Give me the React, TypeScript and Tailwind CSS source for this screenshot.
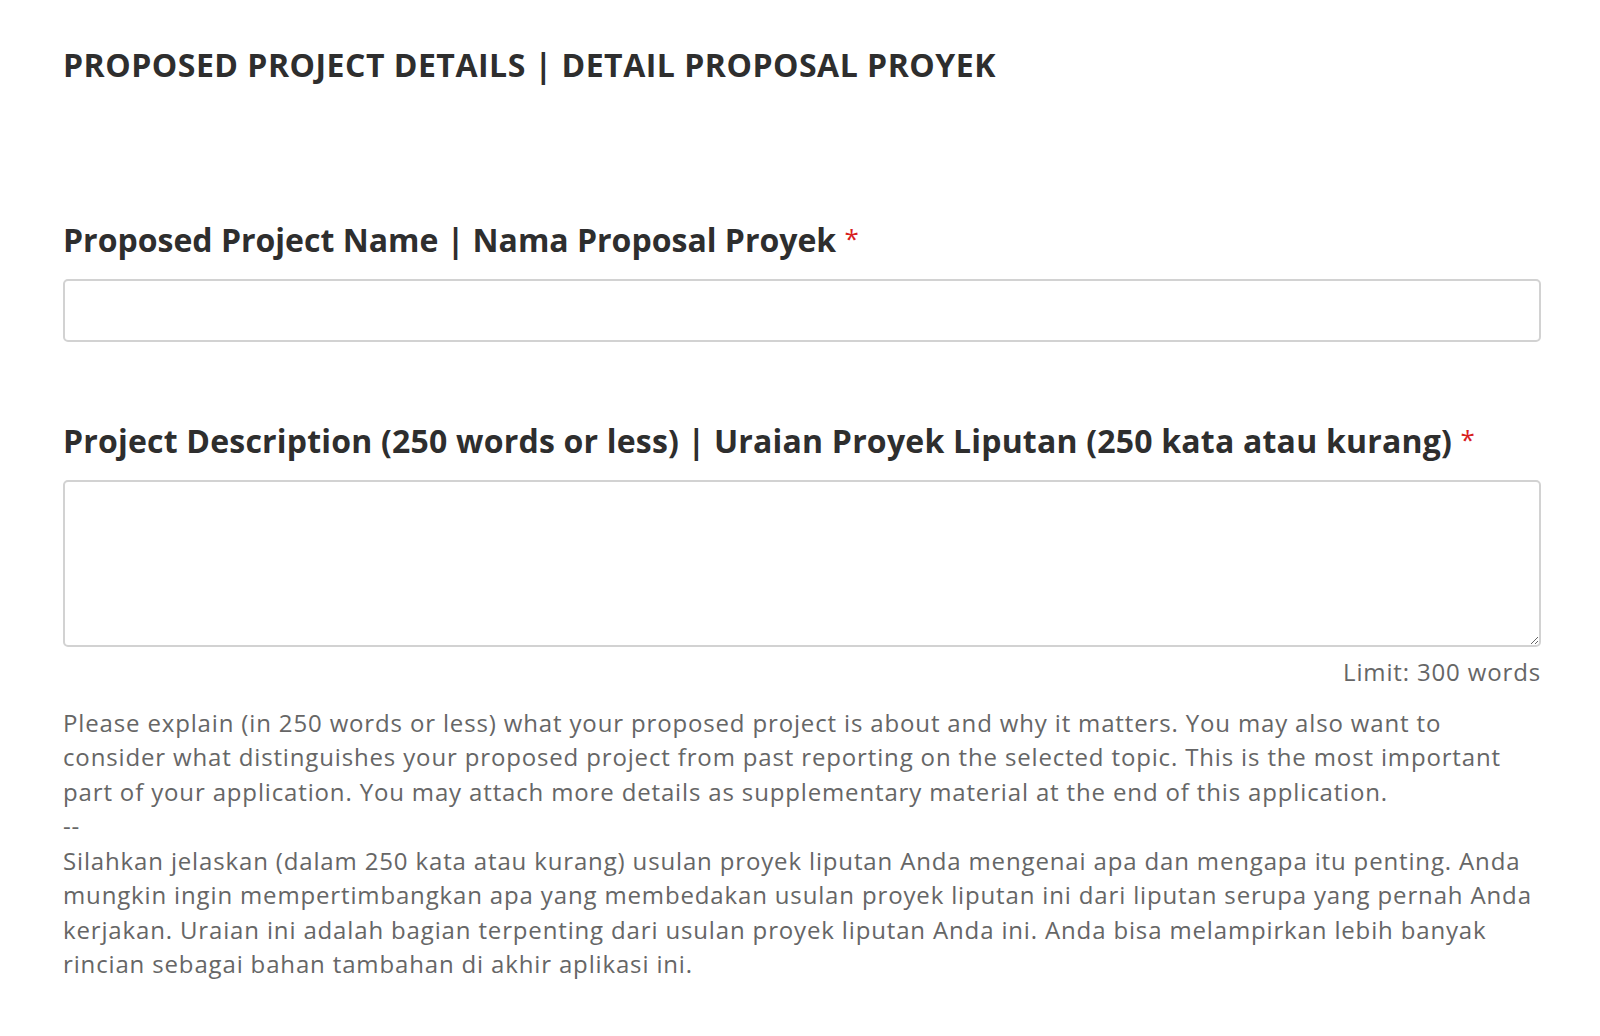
export default function App() {
  return (
    <div className="min-h-screen bg-white px-[63px] pt-[45px] font-['Open_Sans',sans-serif] text-[#2e2e2e]">
      <h2 className="text-[32px] font-bold leading-[40px] tracking-[0.5px]">
        PROPOSED PROJECT DETAILS | DETAIL PROPOSAL PROYEK
      </h2>

      <form className="mr-[-4px]">
        <div className="mt-[135px]">
          <label htmlFor="name" className="block text-[32px] font-bold leading-[40px]">
            Proposed Project Name | Nama Proposal Proyek{' '}
            <span className="relative top-[-4px] text-[26px] leading-none font-normal text-[#d8201e]">*</span>
          </label>
          <input
            id="name"
            type="text"
            className="mt-[19px] block h-[63px] w-full rounded-[5px] border-2 border-[#d2d2d2] bg-white px-3"
          />
        </div>

        <div className="mt-[79px]">
          <label htmlFor="description" className="block text-[32px] font-bold leading-[40px] tracking-[0.2px]">
            Project Description (250 words or less) | Uraian Proyek Liputan (250 kata atau kurang){' '}
            <span className="relative top-[-4px] text-[26px] leading-none font-normal text-[#d8201e]">*</span>
          </label>
          <textarea
            id="description"
            className="mt-[19px] block h-[167px] w-full rounded-[5px] border-2 border-[#d2d2d2] bg-white px-3"
          />
          <div className="mt-[8px] text-right text-[24px] leading-[34.5px] tracking-[0.85px] text-[#666]">
            Limit: 300 words
          </div>
        </div>

        <div className="mt-[16px] text-[24px] leading-[34.5px] tracking-[0.85px] text-[#666]">
          <span className="block">
            Please explain (in 250 words or less) what your proposed project is about and why it matters. You may also want to
          </span>
          <span className="block">
            consider what distinguishes your proposed project from past reporting on the selected topic. This is the most important
          </span>
          <span className="block">
            part of your application. You may attach more details as supplementary material at the end of this application.
          </span>
          <span className="block">--</span>
          <span className="block">
            Silahkan jelaskan (dalam 250 kata atau kurang) usulan proyek liputan Anda mengenai apa dan mengapa itu penting. Anda
          </span>
          <span className="block">
            mungkin ingin mempertimbangkan apa yang membedakan usulan proyek liputan ini dari liputan serupa yang pernah Anda
          </span>
          <span className="block">
            kerjakan. Uraian ini adalah bagian terpenting dari usulan proyek liputan Anda ini. Anda bisa melampirkan lebih banyak
          </span>
          <span className="block">rincian sebagai bahan tambahan di akhir aplikasi ini.</span>
        </div>
      </form>
    </div>
  );
}
